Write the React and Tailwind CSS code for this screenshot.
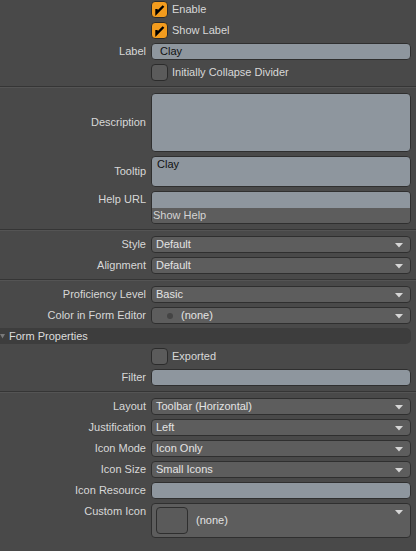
import React from "react";

const Arrow = () => (
  <svg width="8" height="5" viewBox="0 0 8 5" className="absolute right-[7px] top-[6px]">
    <path d="M0 0 H8 L4 4.5 Z" fill="#d6d6d6" />
  </svg>
);

const Check = ({ checked }) => (
  <div
    className={
      "w-[17px] h-[17px] rounded-[4px] border border-[#2b2b2b] flex items-center justify-center " +
      (checked ? "bg-[#f39c1e]" : "bg-[#5b5b5b]")
    }
  >
    {checked && (
      <svg width="13" height="13" viewBox="0 0 13 13">
        <path d="M3.5 6 L3.5 10 L10.5 3" fill="none" stroke="#000" strokeWidth="2.4" strokeLinejoin="miter" />
      </svg>
    )}
  </div>
);

const Row = ({ label, children, top }) => (
  <div className={"flex " + (top ? "items-start" : "items-center")}>
    <div className={"w-[146px] shrink-0 text-right text-[#d8d8d8] whitespace-nowrap " + (top ? "h-[17px] leading-[17px]" : "")}>
      {label}
    </div>
    <div className="ml-[5px] w-[260px]">{children}</div>
  </div>
);

const CheckRow = ({ label, checked }) => (
  <Row label="">
    <div className="flex items-center h-[17px]">
      <Check checked={checked} />
      <span className="ml-[4px] text-[#d8d8d8]">{label}</span>
    </div>
  </Row>
);

const Drop = ({ children }) => (
  <div className="relative h-[17px] rounded-[4px] border border-[#2f2f2f] bg-[#5d5d5d] text-[#e4e4e4] leading-[15px] pl-[4px] flex items-center">
    {children}
    <Arrow />
  </div>
);

const Field = ({ h = "h-[17px]", children, cls = "" }) => (
  <div className={h + " rounded-[4px] border border-[#2f2f2f] bg-[#8e969e] text-[#111] " + cls}>{children}</div>
);

const Divider = () => (
  <div className="h-[4px] flex flex-col justify-center">
    <div className="h-px bg-[#353535]" />
    <div className="h-px bg-[#545454]" />
  </div>
);

export default function App() {
  return (
    <div
      className="w-[416px] h-[551px] bg-[#494949] text-[11px] overflow-hidden"
      style={{ fontFamily: '"Liberation Sans", Arial, sans-serif' }}
    >
      <div className="flex flex-col gap-[4px] pt-[1px]">
        <CheckRow label="Enable" checked />
        <CheckRow label="Show Label" checked />
        <Row label="Label">
          <Field cls="pl-[8px] leading-[15px]">Clay</Field>
        </Row>
        <CheckRow label="Initially Collapse Divider" />
        <Divider />
        <Row label="Description">
          <Field h="h-[59px]" />
        </Row>
        <Row label="Tooltip">
          <Field h="h-[31px]" cls="pl-[5px] pt-[1px] leading-[13px]">Clay</Field>
        </Row>
        <Row label="Help URL" top>
          <div className="h-[33px] rounded-[4px] border border-[#2f2f2f] overflow-hidden flex flex-col">
            <div className="h-[16px] bg-[#8e969e]" />
            <div className="flex-1 bg-[#5d5d5d] text-[#d4d4d4] pl-[1px] leading-[15px]">Show Help</div>
          </div>
        </Row>
        <Divider />
        <Row label="Style">
          <Drop>Default</Drop>
        </Row>
        <Row label="Alignment">
          <Drop>Default</Drop>
        </Row>
        <Divider />
        <Row label="Proficiency Level">
          <Drop>Basic</Drop>
        </Row>
        <Row label="Color in Form Editor">
          <Drop>
            <span className="ml-[11px] w-[6px] h-[6px] rounded-full bg-[#444]" />
            <span className="ml-[8px]">(none)</span>
          </Drop>
        </Row>
        <div className="flex items-center h-[16px] w-[411px] bg-[#3d3d3d] rounded-r-[5px]">
          <svg width="6" height="5" viewBox="0 0 6 5">
            <path d="M0 0 H5 L2.5 4.5 Z" fill="#7a7a7a" />
          </svg>
          <span className="ml-[3px] text-[#dcdcdc]">Form Properties</span>
        </div>
        <CheckRow label="Exported" />
        <Row label="Filter">
          <Field />
        </Row>
        <Divider />
        <Row label="Layout">
          <Drop>Toolbar (Horizontal)</Drop>
        </Row>
        <Row label="Justification">
          <Drop>Left</Drop>
        </Row>
        <Row label="Icon Mode">
          <Drop>Icon Only</Drop>
        </Row>
        <Row label="Icon Size">
          <Drop>Small Icons</Drop>
        </Row>
        <Row label="Icon Resource">
          <Field />
        </Row>
        <Row label="Custom Icon" top>
          <div className="relative h-[35px] rounded-[4px] border border-[#2f2f2f] bg-[#5d5d5d] flex items-center pl-[4px]">
            <div className="w-[32px] h-[27px] rounded-[4px] border border-[#2e2e2e] bg-[#5a5a5a]" />
            <span className="ml-[8px] text-[#e2e2e2]">(none)</span>
            <Arrow />
          </div>
        </Row>
      </div>
    </div>
  );
}
